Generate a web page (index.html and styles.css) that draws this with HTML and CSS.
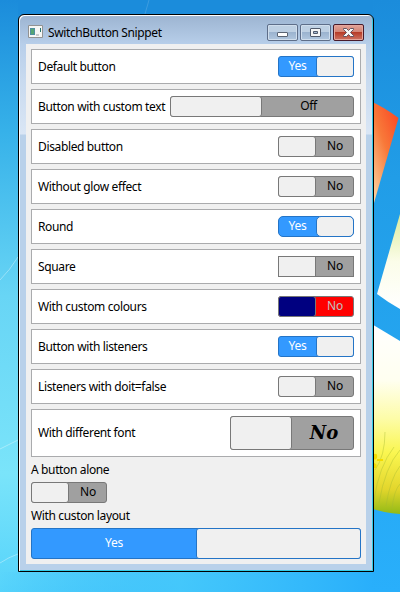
FILE: index.html
```
<!DOCTYPE html>
<html lang="en">
<head>
<meta charset="utf-8">
<title>SwitchButton Snippet</title>
<link rel="stylesheet" href="styles.css">
</head>
<body>
<svg class="wallpaper" width="400" height="592" viewBox="0 0 400 592" aria-hidden="true">
  <defs>
    <linearGradient id="sky" x1="0" y1="0" x2="0" y2="1"><stop offset="0" stop-color="#1b8cdb"/><stop offset=".22" stop-color="#36b1e9"/><stop offset=".5" stop-color="#68d5f5"/><stop offset=".8" stop-color="#7ae4fa"/><stop offset="1" stop-color="#55d3fb"/></linearGradient>
    <linearGradient id="side" x1="0" y1="0" x2="1" y2="0"><stop offset="0" stop-color="#25aafa" stop-opacity="0"/><stop offset=".45" stop-color="#3fc4fb" stop-opacity=".8"/><stop offset=".93" stop-color="#29affb"/></linearGradient>
    <linearGradient id="right" x1="0" y1="0" x2="0" y2="1"><stop offset="0" stop-color="#1b8cdb"/><stop offset=".3" stop-color="#219de7"/><stop offset="1" stop-color="#29affb"/></linearGradient>
    <linearGradient id="red" x1=".8" y1="0" x2="0" y2="1"><stop offset="0" stop-color="#fa4b26"/><stop offset=".4" stop-color="#f87939"/><stop offset="1" stop-color="#fde3b0"/></linearGradient>
    <linearGradient id="green" x1="0" y1="0" x2="0" y2="1"><stop offset="0" stop-color="#dcec9b"/><stop offset=".5" stop-color="#fbfde9"/><stop offset="1" stop-color="#fff"/></linearGradient>
    <linearGradient id="meadow" x1="0" y1="0" x2="0" y2="1"><stop offset="0" stop-color="#fff"/><stop offset=".3" stop-color="#fffff0"/><stop offset=".5" stop-color="#fdfca8"/><stop offset=".68" stop-color="#faf650"/><stop offset=".87" stop-color="#e3d62c"/><stop offset="1" stop-color="#92ba16"/></linearGradient>
  </defs>
  <path fill="url(#sky)" d="M0 0h400v592H0z"/>
  <path fill="url(#side)" d="M0 572h400v20H0z"/>
  <path fill="url(#right)" d="M372 0h28v592h-28z"/>
  <path fill="#1b8cdb" d="M18 0h355v20H18z"/>
  <path fill="url(#red)" d="M370 101q14 6 28.500 17l-24.500 85h-4z"/>
  <path fill="url(#green)" d="M400 214l-23 80q12 9 23 15z"/>
  <path fill="url(#meadow)" d="M370 323l30 18v173q-16-1-30-6z"/>
  <g fill="none" stroke="#a4b832" stroke-opacity=".4">
    <path d="M374 500q5-34 20-53M379 503q6-36 21-53M386 506q4-27 14-40M375 470q10-14 10-38M392 509q2-19 8-25"/>
  </g>
  <path fill="#f3db00" d="M374 454q4-1 3 4-2 3-3 1zM377 459h6v2h-6zM374 463q4 1 2 5h-2z"/>
  <path fill="none" stroke="#fff" stroke-opacity=".35" d="M0 280q10-10 18-23M0 449l18-9M0 563q9-6 18-9"/>
  <path fill="none" stroke="#fff" stroke-opacity=".15" d="M145 14l4-14"/>
</svg>
<main class="window">
  <header class="titlebar">
    <svg class="app-icon" width="16" height="13" viewBox="0 0 16 13"><path fill="#f6f7f5" stroke="#929292" d="M.5.5h14v12H.5z"/><path fill="#4f8fa0" d="M2 3h5v7H2z"/><path fill="#55a573" d="M3 4h3v5H3z"/><path fill="#ccc" d="M8 9h3v2H8z"/><path fill="#29766f" d="M12 3h1v4h-1z"/></svg>
    <h1>SwitchButton Snippet</h1>
    <div class="controls">
      <span class="control"><svg width="29" height="15"><rect x="9.5" y="7.5" width="10" height="4" rx=".5" fill="#fff" stroke="#5a6473"/></svg></span>
      <span class="control"><svg width="29" height="15"><rect x="9.5" y="3.5" width="10" height="8" rx=".5" fill="#f5f5f5" stroke="#505a6b"/><path fill="#a7bbd3" stroke="#505a6b" d="M12.500 6.500h4v2h-4z"/></svg></span>
      <span class="control close"><svg width="29" height="15"><path fill="#f6f6f6" stroke="#594b59" stroke-width=".9" d="M9.500 3.500h3l2 2 2-2h3v1l-3 3 3 3v1h-3l-2-2-2 2h-3v-1l3-3-3-3z"/></svg></span>
    </div>
  </header>
  <div class="client">
    <div class="row"><span class="label">Default button</span><div class="switch on"><span class="text">Yes</span><i class="thumb"></i></div></div>
    <div class="row"><span class="label">Button with custom text</span><div class="switch wide"><i class="thumb"></i><span class="text">Off</span></div></div>
    <div class="row"><span class="label">Disabled button</span><div class="switch"><i class="thumb"></i><span class="text">No</span></div></div>
    <div class="row"><span class="label">Without glow effect</span><div class="switch"><i class="thumb"></i><span class="text">No</span></div></div>
    <div class="row"><span class="label">Round</span><div class="switch on round"><span class="text">Yes</span><i class="thumb"></i></div></div>
    <div class="row"><span class="label">Square</span><div class="switch square"><i class="thumb"></i><span class="text">No</span></div></div>
    <div class="row"><span class="label">With custom colours</span><div class="switch colours"><i class="thumb"></i><span class="text">No</span></div></div>
    <div class="row"><span class="label">Button with listeners</span><div class="switch on"><span class="text">Yes</span><i class="thumb"></i></div></div>
    <div class="row"><span class="label">Listeners with doit=false</span><div class="switch"><i class="thumb"></i><span class="text">No</span></div></div>
    <div class="row tall"><span class="label">With different font</span><div class="switch large"><i class="thumb"></i><span class="text">No</span></div></div>
    <div class="caption">A button alone</div>
    <div class="switch"><i class="thumb"></i><span class="text">No</span></div>
    <div class="caption">With custon layout</div>
    <div class="switch on full"><span class="text">Yes</span><i class="thumb"></i></div>
  </div>
</main>
</body>
</html>
```
FILE: styles.css
```
* { box-sizing: border-box; }
body {
  margin: 0;
  width: 400px;
  height: 592px;
  overflow: hidden;
  padding: 14px 0 0 18px;
  font: 12px/16px "Noto Sans", sans-serif;
  color: #000;
}
.wallpaper { position: absolute; left: 0; top: 0; z-index: -1; }
.window {
  width: 356px;
  height: 558px;
  border: 1px solid #000;
  border-radius: 6px 6px 0 0;
  padding: 0 6px 6px;
  background: linear-gradient(#9cb4d1, #b8cfea 30px, #c8daef 65px, #dae6f5 119px, #b9d1ea 120px);
  box-shadow: inset 1px 1px #fff, inset -1px -1px #35cbe7;
}
.titlebar {
  height: 29px;
  padding: 0 3px 0 3px;
  display: flex;
  align-items: flex-start;
}
.app-icon { margin: 10px 4px 0 0; }
h1 { margin: 9px 0 0; font-size: 12px; font-weight: 400; line-height: 18px; letter-spacing: -.38px; white-space: nowrap; }
.controls { display: flex; gap: 2px; margin: 9px 0 0 auto; }
.control {
  width: 31px;
  height: 17px;
  border: 1px solid #5e6e89;
  border-radius: 2px;
  background: linear-gradient(#bed0e3 0 45%, #9bb3cf 50%, #b1c7df);
  box-shadow: inset 0 0 0 1px #d0deed;
}
.control svg { display: block; }
.close {
  border-color: #481b2b;
  background: linear-gradient(#e3a399, #d38576 45%, #b73c28 50%, #ce7363);
  box-shadow: inset 0 0 0 1px #e5a69c;
}
.client {
  height: 520px;
  margin: 0 1px;
  padding: 5px;
  background: #f0f0f0;
}
.row {
  height: 35px;
  margin-bottom: 5px;
  padding: 0 6px;
  border: 1px solid #aaabad;
  background: #fff;
  display: flex;
  align-items: center;
  justify-content: space-between;
}
.label, .caption { letter-spacing: -.36px; white-space: nowrap; }
.tall { height: 48px; }
.caption { height: 15px; margin: 0 0 5px; line-height: 16px; }
.switch {
  width: 76px;
  height: 21px;
  display: grid;
  grid-template-columns: 37px 1fr;
  border: 1px solid #787878;
  border-radius: 3px;
  background: #a0a0a0;
}
.thumb {
  margin: -1px 0 -1px -1px;
  border: 1px solid #787878;
  border-radius: 3px;
  background: #f0f0f0;
}
.text { display: flex; align-items: center; justify-content: center; padding: 0 0 2px 1px; letter-spacing: -.3px; }
.on { grid-template-columns: 37px 1fr; border-color: #2474c6; background: #3399ff; color: #fff; }
.on .text { padding-left: 0; }
.on .thumb { border-color: #2474c6; margin: -1px -1px -1px 0; }
.wide { width: 184px; grid-template-columns: 91px 1fr; }
.wide .text { padding-left: 2px; }
.round, .round .thumb { border-radius: 5px; }
.square, .square .thumb { border-radius: 0; }
.colours { background: #f00; color: #c0c0c0; }
.colours .thumb { background: #000080; }
.large { width: 124px; height: 34px; grid-template-columns: 61px 1fr; }
.large .text { padding: 0 0 0 3px; font: italic bold 18px/30px "DejaVu Serif", serif; letter-spacing: 0; }
.client > .switch { margin-bottom: 5px; }
.full { width: 330px; height: 31px; grid-template-columns: 164px 1fr; }
```
